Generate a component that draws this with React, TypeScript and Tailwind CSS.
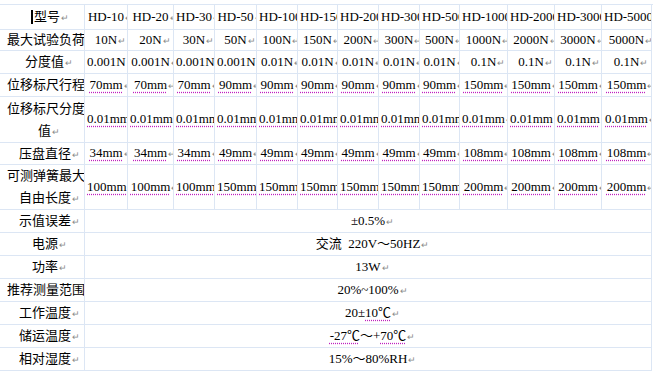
const models = [
  "HD-10",
  "HD-20",
  "HD-30",
  "HD-50",
  "HD-100",
  "HD-150",
  "HD-200",
  "HD-300",
  "HD-500",
  "HD-1000",
  "HD-2000",
  "HD-3000",
  "HD-5000",
];

const cols = "grid grid-cols-[85px_43px_46px_41px_42px_41px_40px_41px_41px_40px_48px_47px_47px_50px]";

const rep = (v: string, n: number) => Array(n).fill(v);

const specRows: { label: string[]; values: string[]; h: string }[] = [
  {
    label: ["最大试验负荷"],
    values: ["10N", "20N", "30N", "50N", "100N", "150N", "200N", "300N", "500N", "1000N", "2000N", "3000N", "5000N"],
    h: "h-[21px]",
  },
  {
    label: ["分度值"],
    values: [...rep("0.001N", 4), ...rep("0.01N", 5), ...rep("0.1N", 4)],
    h: "h-[23px]",
  },
  {
    label: ["位移标尺行程"],
    values: [...rep("70mm", 3), ...rep("90mm", 6), ...rep("150mm", 4)],
    h: "h-[23px]",
  },
  {
    label: ["位移标尺分度", "值"],
    values: rep("0.01mm", 13),
    h: "h-[46px]",
  },
  {
    label: ["压盘直径"],
    values: [...rep("34mm", 3), ...rep("49mm", 6), ...rep("108mm", 4)],
    h: "h-[22px]",
  },
  {
    label: ["可测弹簧最大", "自由长度"],
    values: [...rep("100mm", 3), ...rep("150mm", 6), ...rep("200mm", 4)],
    h: "h-[45px]",
  },
];

// merged rows; parts marked true get the dotted spell-check underline
const commonRows: { label: string; parts: [string, boolean][] }[] = [
  { label: "示值误差", parts: [["±0.5%", false]] },
  { label: "电源", parts: [["交流  220V～50HZ", false]] },
  { label: "功率", parts: [["13W", false]] },
  { label: "推荐测量范围", parts: [["20%~100%", false]] },
  { label: "工作温度", parts: [["20±", false], ["10℃", true]] },
  { label: "储运温度", parts: [["-27℃", true], ["～+", false], ["70℃", true]] },
  { label: "相对湿度", parts: [["15%～80%RH", false]] },
];

// CJK labels are 13px a glyph; centre them on x≈44 like the original cells
const indent = (text: string) => Math.max(7, Math.round(44.5 - 6.5 * text.length));

// paragraph mark: hangs after the text without taking part in centring
const Mark = () => (
  <span className="inline-block w-0 overflow-visible">
    <span className="pl-[1px] text-[9px] text-[#8a8a8a]">↵</span>
  </span>
);

const Squiggle = ({ children }: { children: React.ReactNode }) => (
  <span className="underline decoration-dotted decoration-[#c020c0] underline-offset-[3px]">{children}</span>
);

const cellBox = "flex items-center overflow-hidden border-r border-b border-[#dce6f4]";

const Cell = ({ children }: { children: React.ReactNode }) => (
  <div className={cellBox}>
    <div className="w-full px-[2px] text-center whitespace-nowrap leading-[18px]">
      {children}
      <Mark />
    </div>
  </div>
);

const Label = ({ lines }: { lines: string[] }) => (
  <div
    className={`flex flex-col justify-center overflow-hidden border-r border-b border-[#dce6f4] font-['Noto_Sans_CJK_SC',sans-serif] ${
      lines.length > 1 ? "leading-[22px]" : "leading-[18px]"
    }`}
  >
    {lines.map((l, i) => (
      <div key={i} className="whitespace-nowrap text-left" style={{ paddingLeft: indent(l) }}>
        {l}
        {i === lines.length - 1 && <Mark />}
      </div>
    ))}
  </div>
);

const App = () => {
  return (
    <div className="w-[653px] h-[372px] bg-white pt-[4px] overflow-hidden">
      <div className="border-t border-[#dce6f4] text-[13px] text-black font-['Liberation_Serif','Noto_Sans_CJK_SC',serif]">
        <div className={`${cols} h-[25px]`}>
          <div className="flex items-center pl-[31px] border-r border-b border-[#dce6f4] leading-[18px] font-['Noto_Sans_CJK_SC',sans-serif]">
            <span className="w-[2px] h-[14px] bg-black mr-[1px]" />
            <span className="whitespace-nowrap">
              型号
              <Mark />
            </span>
          </div>
          {models.map((m) => (
            <Cell key={m}>{m}</Cell>
          ))}
        </div>
        {specRows.map((row) => (
          <div key={row.label.join("")} className={`${cols} ${row.h}`}>
            <Label lines={row.label} />
            {row.values.map((v, i) => (
              <Cell key={i}>{v.endsWith("mm") ? <Squiggle>{v}</Squiggle> : v}</Cell>
            ))}
          </div>
        ))}
        {commonRows.map((row) => (
          <div key={row.label} className="grid grid-cols-[85px_567px] h-[23px]">
            <Label lines={[row.label]} />
            <Cell>
              {row.parts.map(([t, u], i) =>
                u ? <Squiggle key={i}>{t}</Squiggle> : <span key={i} className="whitespace-pre">{t}</span>
              )}
            </Cell>
          </div>
        ))}
      </div>
    </div>
  );
};

export default App;
